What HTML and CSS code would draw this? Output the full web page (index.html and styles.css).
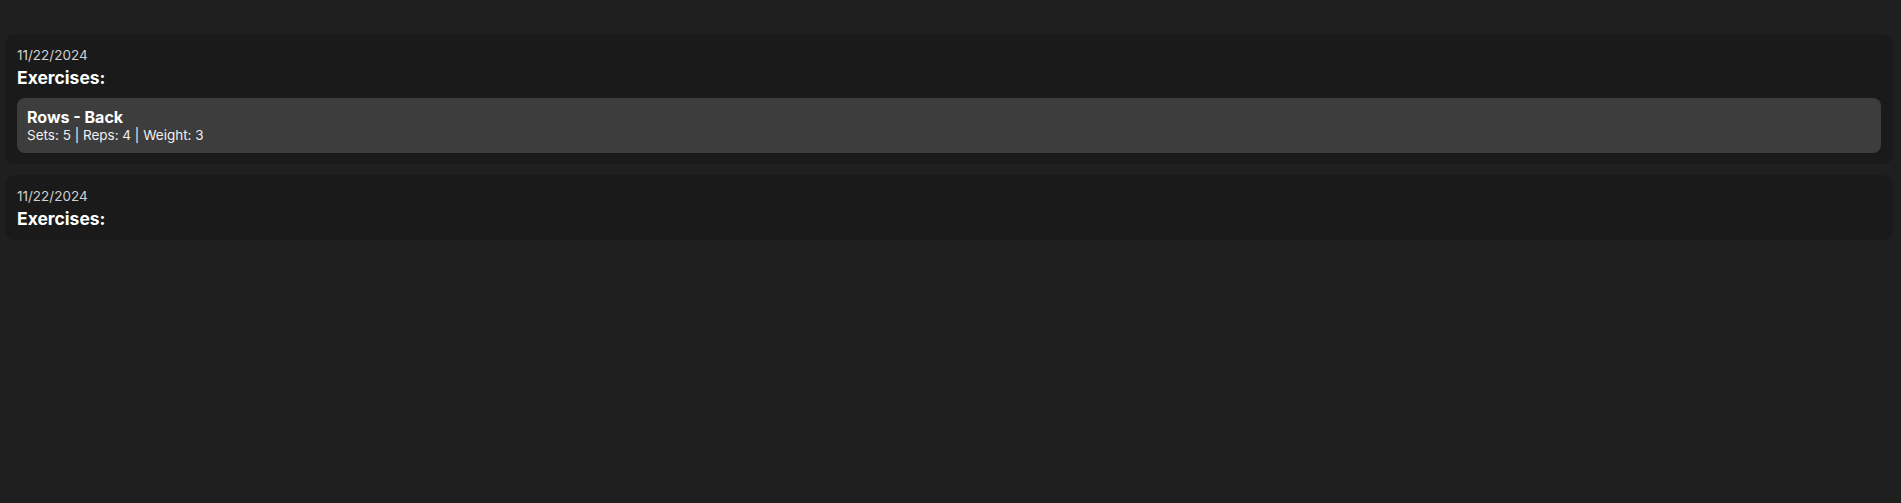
FILE: index.html
```html
<!DOCTYPE html>
<html>
<head>
<meta charset="utf-8">
<link rel="stylesheet" href="styles.css">
</head>
<body>
<div class="page">
  <div class="card">
    <div class="date">11/22/2024</div>
    <div class="title">Exercises:</div>
    <div class="exercise">
      <div class="ex-name">Rows - Back</div>
      <div class="ex-details">Sets: 5 | Reps: 4 | Weight: 3</div>
    </div>
  </div>
  <div class="card">
    <div class="date">11/22/2024</div>
    <div class="title">Exercises:</div>
  </div>
</div>
</body>
</html>
```
FILE: styles.css
```css
html, body {
  margin: 0;
  padding: 0;
  background: #1f1f1f;
  height: 100%;
}
body {
  font-family: Inter, "Liberation Sans", sans-serif;
  color: #ffffff;
}
.page {
  padding: 34px 8px 0 5px;
  display: flex;
  flex-direction: column;
  gap: 11px;
}
.card {
  background: #1a1a1a;
  border-radius: 10px;
  padding: 13px 12px 11px;
}
.date {
  font-size: 13.5px;
  line-height: 17px;
  color: #d0d0d0;
}
.title {
  margin-top: 3px;
  font-size: 17.5px;
  line-height: 21px;
  font-weight: 700;
  color: #ffffff;
}
.exercise {
  margin-top: 10px;
  background: #3d3d3d;
  border-radius: 8px;
  padding: 10px 10px 9px;
}
.ex-name {
  font-size: 16px;
  line-height: 19px;
  font-weight: 700;
  color: #ffffff;
}
.ex-details {
  font-size: 13.5px;
  line-height: 17px;
  color: #f0f0f0;
}
```
